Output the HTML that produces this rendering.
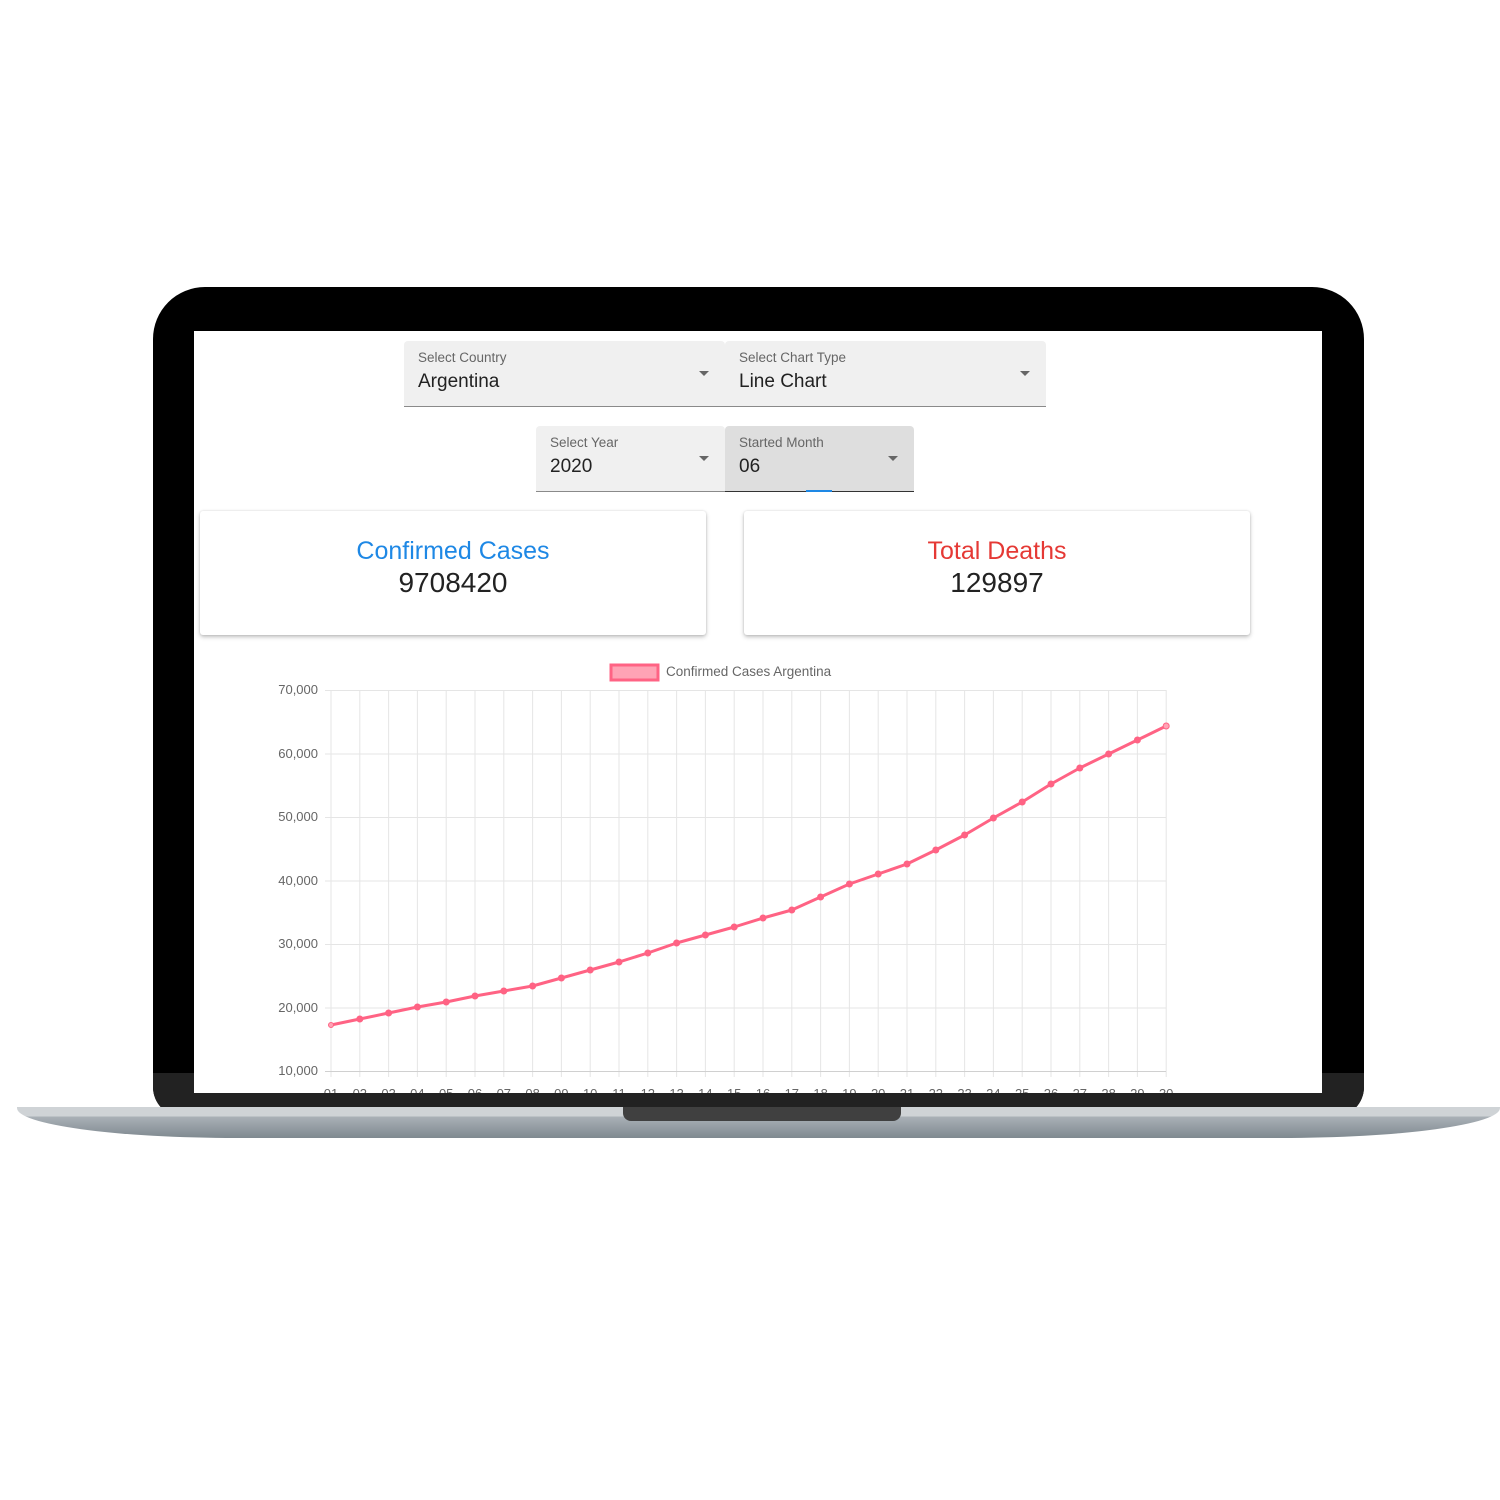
<!DOCTYPE html>
<html><head><meta charset="utf-8"><style>
*{margin:0;padding:0;box-sizing:border-box}
body{width:1500px;height:1500px;background:#fff;position:relative;overflow:hidden;font-family:"Liberation Sans",Arial,sans-serif}
.abs{position:absolute}
.bezel{left:153px;top:287px;width:1211px;height:830px;background:#000;border-radius:52px 52px 30px 30px;overflow:hidden}
.bezel .low{position:absolute;left:0;right:0;top:786px;bottom:0;background:#222}
.base{left:17px;top:1107px;width:1483px;height:31px;background:linear-gradient(#cfd3d6 0,#cfd3d6 9px,#a9b0b6 10px,#7f8990 100%);border-radius:0 0 220px 220px/0 0 30px 30px}
.notch{left:623px;top:1107px;width:278px;height:14px;background:#404040;border-radius:0 0 8px 8px}
.screen{left:194px;top:331px;width:1128px;height:762px;background:#fff;overflow:hidden}
.sel{position:absolute;background:#f0f0f0;border-bottom:1px solid #8a8a8a;border-radius:4px 4px 0 0}
.sel .l{position:absolute;left:14px;top:9px;font-size:13.5px;color:#666}
.sel .v{position:absolute;left:14px;top:30px;font-size:19px;color:#222}
.sel .a{position:absolute;right:16px;top:30px;width:0;height:0;border-left:5px solid transparent;border-right:5px solid transparent;border-top:5px solid #666}
.card{position:absolute;background:#fff;box-shadow:0 2px 4px rgba(0,0,0,.25),0 0 2px rgba(0,0,0,.12);border-radius:3px;text-align:center}
.card .t{margin-top:26px;font-size:25px}
.card .n{font-size:28px;color:#222;margin-top:1px}
</style></head><body>
<div class="abs bezel"><div class="low"></div></div>
<div class="abs base"></div>
<div class="abs notch"></div>
<div class="abs screen">
<svg class="abs" style="left:-194px;top:-331px" width="1500" height="1500" font-family="Liberation Sans, Arial, sans-serif">
<g stroke="#e5e5e5" stroke-width="1">
<line x1="331" y1="690" x2="331" y2="1077"/><line x1="359.8" y1="690" x2="359.8" y2="1077"/><line x1="388.6" y1="690" x2="388.6" y2="1077"/><line x1="417.4" y1="690" x2="417.4" y2="1077"/><line x1="446.2" y1="690" x2="446.2" y2="1077"/><line x1="475" y1="690" x2="475" y2="1077"/><line x1="503.8" y1="690" x2="503.8" y2="1077"/><line x1="532.6" y1="690" x2="532.6" y2="1077"/><line x1="561.4" y1="690" x2="561.4" y2="1077"/><line x1="590.2" y1="690" x2="590.2" y2="1077"/><line x1="619" y1="690" x2="619" y2="1077"/><line x1="647.8" y1="690" x2="647.8" y2="1077"/><line x1="676.6" y1="690" x2="676.6" y2="1077"/><line x1="705.4" y1="690" x2="705.4" y2="1077"/><line x1="734.2" y1="690" x2="734.2" y2="1077"/><line x1="763" y1="690" x2="763" y2="1077"/><line x1="791.8" y1="690" x2="791.8" y2="1077"/><line x1="820.6" y1="690" x2="820.6" y2="1077"/><line x1="849.4" y1="690" x2="849.4" y2="1077"/><line x1="878.2" y1="690" x2="878.2" y2="1077"/><line x1="907" y1="690" x2="907" y2="1077"/><line x1="935.8" y1="690" x2="935.8" y2="1077"/><line x1="964.6" y1="690" x2="964.6" y2="1077"/><line x1="993.4" y1="690" x2="993.4" y2="1077"/><line x1="1022.2" y1="690" x2="1022.2" y2="1077"/><line x1="1051" y1="690" x2="1051" y2="1077"/><line x1="1079.8" y1="690" x2="1079.8" y2="1077"/><line x1="1108.6" y1="690" x2="1108.6" y2="1077"/><line x1="1137.4" y1="690" x2="1137.4" y2="1077"/><line x1="1166.2" y1="690" x2="1166.2" y2="1077"/>
<line x1="325" y1="690.5" x2="1166" y2="690.5"/><line x1="325" y1="754" x2="1166" y2="754"/><line x1="325" y1="817.5" x2="1166" y2="817.5"/><line x1="325" y1="881" x2="1166" y2="881"/><line x1="325" y1="944.5" x2="1166" y2="944.5"/><line x1="325" y1="1008" x2="1166" y2="1008"/><line x1="325" y1="1071.5" x2="1166" y2="1071.5" stroke="#d0d0d0"/>
</g>
<g font-size="13" fill="#666" text-anchor="end">
<text x="318" y="694">70,000</text><text x="318" y="758">60,000</text><text x="318" y="821">50,000</text><text x="318" y="885">40,000</text><text x="318" y="948">30,000</text><text x="318" y="1012">20,000</text><text x="318" y="1075">10,000</text>
</g>
<g font-size="13" fill="#666" text-anchor="middle">
<text x="331" y="1098">01</text><text x="359.8" y="1098">02</text><text x="388.6" y="1098">03</text><text x="417.4" y="1098">04</text><text x="446.2" y="1098">05</text><text x="475" y="1098">06</text><text x="503.8" y="1098">07</text><text x="532.6" y="1098">08</text><text x="561.4" y="1098">09</text><text x="590.2" y="1098">10</text><text x="619" y="1098">11</text><text x="647.8" y="1098">12</text><text x="676.6" y="1098">13</text><text x="705.4" y="1098">14</text><text x="734.2" y="1098">15</text><text x="763" y="1098">16</text><text x="791.8" y="1098">17</text><text x="820.6" y="1098">18</text><text x="849.4" y="1098">19</text><text x="878.2" y="1098">20</text><text x="907" y="1098">21</text><text x="935.8" y="1098">22</text><text x="964.6" y="1098">23</text><text x="993.4" y="1098">24</text><text x="1022.2" y="1098">25</text><text x="1051" y="1098">26</text><text x="1079.8" y="1098">27</text><text x="1108.6" y="1098">28</text><text x="1137.4" y="1098">29</text><text x="1166.2" y="1098">30</text>
</g>
<rect x="611" y="665" width="47" height="15" fill="#ffa3b5" stroke="#ff6384" stroke-width="3"/>
<text x="666" y="676" font-size="13.5" fill="#666">Confirmed Cases Argentina</text>
<polyline fill="none" stroke="#ff6384" stroke-width="3" stroke-linejoin="round" points="331,1025 359.8,1019 388.6,1013 417.4,1007 446.2,1002 475,996 503.8,991 532.6,986 561.4,978 590.2,970 619,962 647.8,953 676.6,943 705.4,935 734.2,927 763,918 791.8,910 820.6,897 849.4,884 878.2,874 907,864 935.8,850 964.6,835 993.4,818 1022.2,802 1051,784 1079.8,768 1108.6,754 1137.4,740 1166.2,726"/>
<g fill="#ff6384" stroke="#ff6384" stroke-width="1">
<circle cx="331" cy="1025" r="2.5" fill="#ffa3b5"/><circle cx="359.8" cy="1019" r="3"/><circle cx="388.6" cy="1013" r="3"/><circle cx="417.4" cy="1007" r="3"/><circle cx="446.2" cy="1002" r="3"/><circle cx="475" cy="996" r="3"/><circle cx="503.8" cy="991" r="3"/><circle cx="532.6" cy="986" r="3"/><circle cx="561.4" cy="978" r="3"/><circle cx="590.2" cy="970" r="3"/><circle cx="619" cy="962" r="3"/><circle cx="647.8" cy="953" r="3"/><circle cx="676.6" cy="943" r="3"/><circle cx="705.4" cy="935" r="3"/><circle cx="734.2" cy="927" r="3"/><circle cx="763" cy="918" r="3"/><circle cx="791.8" cy="910" r="3"/><circle cx="820.6" cy="897" r="3"/><circle cx="849.4" cy="884" r="3"/><circle cx="878.2" cy="874" r="3"/><circle cx="907" cy="864" r="3"/><circle cx="935.8" cy="850" r="3"/><circle cx="964.6" cy="835" r="3"/><circle cx="993.4" cy="818" r="3"/><circle cx="1022.2" cy="802" r="3"/><circle cx="1051" cy="784" r="3"/><circle cx="1079.8" cy="768" r="3"/><circle cx="1108.6" cy="754" r="3"/><circle cx="1137.4" cy="740" r="3"/><circle cx="1166.2" cy="726" r="3" fill="#ffa3b5"/>
</g>
</svg>
<div class="sel" style="left:210px;top:10px;width:321px;height:66px"><div class="l">Select Country</div><div class="v">Argentina</div><div class="a"></div></div>
<div class="sel" style="left:531px;top:10px;width:321px;height:66px"><div class="l">Select Chart Type</div><div class="v">Line Chart</div><div class="a"></div></div>
<div class="sel" style="left:342px;top:95px;width:189px;height:66px"><div class="l">Select Year</div><div class="v">2020</div><div class="a"></div></div>
<div class="sel" style="left:531px;top:95px;width:189px;height:66px;background:#dedede;border-bottom-color:#333"><div class="l">Started Month</div><div class="v">06</div><div class="a"></div><div style="position:absolute;left:81px;bottom:-1px;width:26px;height:2px;background:#1e88e5"></div></div>
<div class="card" style="left:6px;top:180px;width:506px;height:124px"><div class="t" style="color:#1e88e5">Confirmed Cases</div><div class="n">9708420</div></div>
<div class="card" style="left:550px;top:180px;width:506px;height:124px"><div class="t" style="color:#e53935">Total Deaths</div><div class="n">129897</div></div>
</div>
</body></html>
